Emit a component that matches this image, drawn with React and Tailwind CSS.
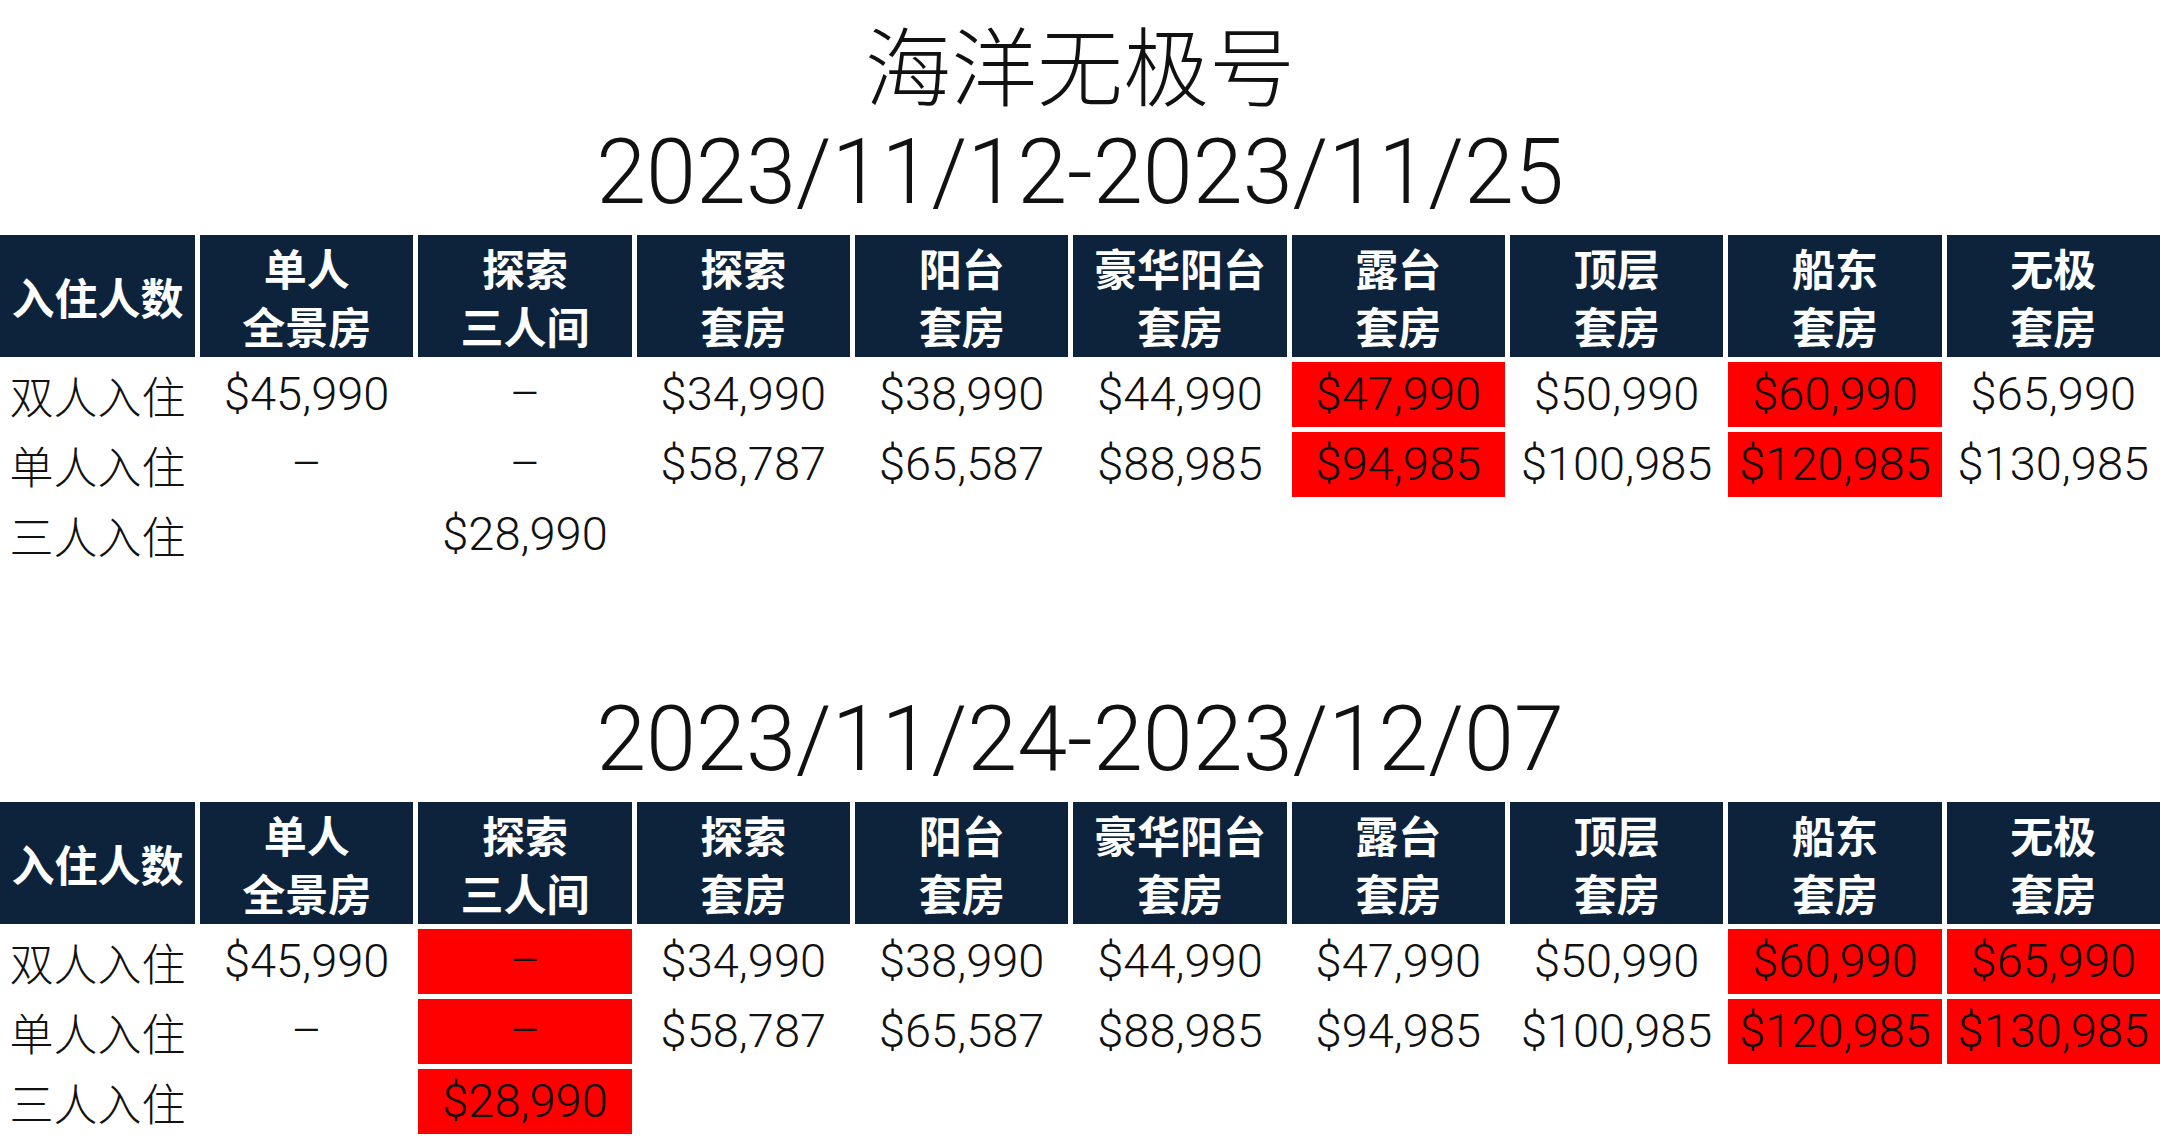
import React from 'react'

const cols = [
  ['单人', '全景房'],
  ['探索', '三人间'],
  ['探索', '套房'],
  ['阳台', '套房'],
  ['豪华阳台', '套房'],
  ['露台', '套房'],
  ['顶层', '套房'],
  ['船东', '套房'],
  ['无极', '套房'],
]

const rows = [
  { label: '双人入住', values: ['$45,990', '–', '$34,990', '$38,990', '$44,990', '$47,990', '$50,990', '$60,990', '$65,990'] },
  { label: '单人入住', values: ['–', '–', '$58,787', '$65,587', '$88,985', '$94,985', '$100,985', '$120,985', '$130,985'] },
  { label: '三人入住', values: ['', '$28,990', '', '', '', '', '', '', ''] },
]

const sections = [
  {
    title: '海洋无极号',
    dates: '2023/11/12-2023/11/25',
    // "row-col" keys of the highlighted cells
    red: ['0-5', '1-5', '0-7', '1-7'],
  },
  {
    title: '',
    dates: '2023/11/24-2023/12/07',
    red: ['0-1', '1-1', '2-1', '0-7', '1-7', '0-8', '1-8'],
  },
]

function PriceTable({ red }) {
  return (
    <div className="grid grid-cols-[195px_repeat(9,1fr)] grid-rows-[122px_repeat(3,65px)] gap-[5px]">
      <div className="bg-[#0c233b] flex items-center justify-center text-white font-bold text-[43px] font-['Noto_Sans_CJK_SC',sans-serif]">
        入住人数
      </div>
      {cols.map((c, i) => (
        <div
          key={i}
          className="bg-[#0c233b] flex flex-col items-center justify-center text-white font-bold text-[43px] leading-[58px] font-['Noto_Sans_CJK_SC',sans-serif]"
        >
          <span>{c[0]}</span>
          <span>{c[1]}</span>
        </div>
      ))}
      {rows.map((r, ri) => (
        <React.Fragment key={ri}>
          <div className="flex items-center justify-center text-[44px] font-light text-[#111] font-['Noto_Sans_CJK_SC',sans-serif]">
            {r.label}
          </div>
          {r.values.map((v, ci) => (
            <div
              key={ci}
              className={
                "flex items-center justify-center text-[47px] font-light text-[#111] font-['Roboto','Noto_Sans_CJK_SC',sans-serif] " +
                (red.includes(ri + '-' + ci) ? 'bg-[#ff0000]' : '')
              }
            >
              {v}
            </div>
          ))}
        </React.Fragment>
      ))}
    </div>
  )
}

export default function App() {
  return (
    <div className="w-[2160px] h-[1142px] bg-white overflow-hidden">
      {sections.map((s, i) => (
        <div key={i}>
          <div className="h-[128px] pt-[9px] flex justify-center">
            {s.title && (
              <h1 className="text-[86px] leading-[1.25] font-light text-[#111] font-['Noto_Sans_CJK_SC',sans-serif]">
                {s.title}
              </h1>
            )}
          </div>
          <div className="h-[107px] flex justify-center">
            <h2 className="text-[90px] leading-none font-light text-[#111] font-['Roboto','Noto_Sans_CJK_SC',sans-serif]">
              {s.dates}
            </h2>
          </div>
          <PriceTable red={s.red} />
        </div>
      ))}
    </div>
  )
}
